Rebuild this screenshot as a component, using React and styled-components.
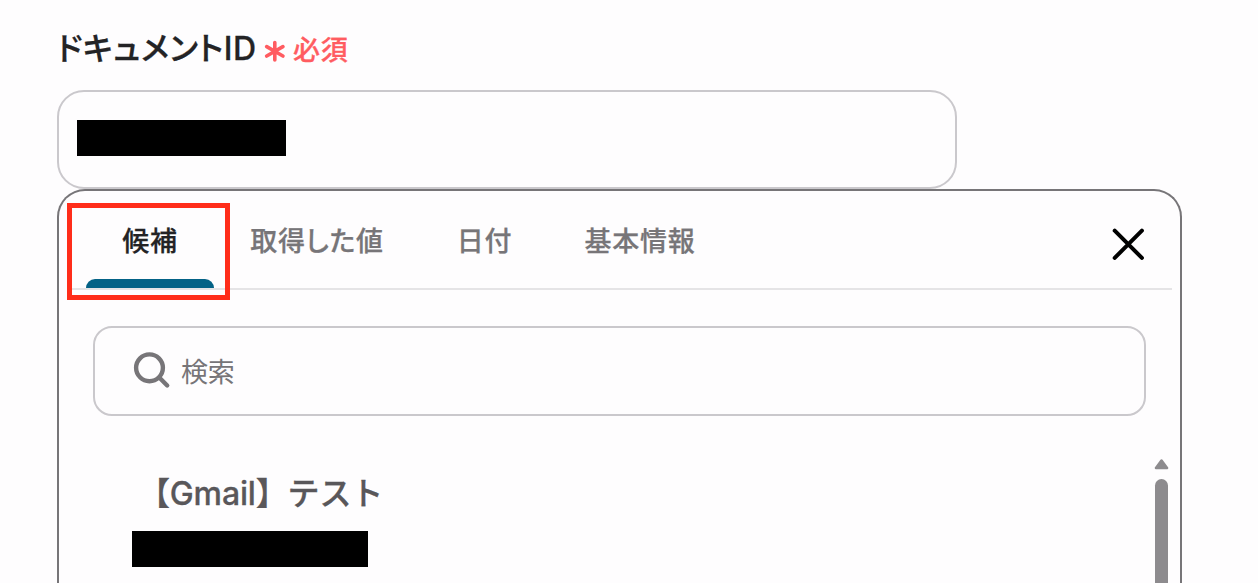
import React from 'react';
import styled, { createGlobalStyle } from 'styled-components';

const GlobalStyle = createGlobalStyle`
  * {
    box-sizing: border-box;
  }
  body {
    margin: 0;
    background: #fefdfe;
    font-family: Inter, 'Noto Sans CJK JP', sans-serif;
    overflow: hidden;
  }
`;

const PageBlock = styled.div`
  height: 583px;
  padding: 30px 76px 0 57px;
  display: flex;
  flex-direction: column;
  overflow: hidden;
`;

const FieldLabel = styled.div`
  display: flex;
  align-items: center;
  height: 40px;
  margin-bottom: 20px;
  white-space: nowrap;
`;

const LabelText = styled.span`
  width: 207px;
  padding-bottom: 3px;
  font-size: 32px;
  line-height: 38px;
  font-weight: 500;
  font-feature-settings: 'palt';
  letter-spacing: 0.55px;
  -webkit-text-stroke: 0.3px currentColor;
  color: #232325;
`;

const RequiredText = styled.span`
  margin-left: 8px;
  padding-top: 2px;
  font-size: 27px;
  line-height: 38px;
  font-weight: 500;
  letter-spacing: 0.8px;
  -webkit-text-stroke: 0.3px currentColor;
  color: #ff5c61;
`;

const FieldBox = styled.div`
  display: flex;
  align-items: center;
  flex-shrink: 0;
  width: 900px;
  height: 99px;
  padding: 0 18px 4px;
  border: 2px solid #cac8cc;
  border-radius: 27px;
`;

const MaskedValue = styled.div`
  width: ${({ $width }) => $width}px;
  height: 36px;
  background: #000;
`;

const Panel = styled.div`
  flex: 1;
  display: flex;
  flex-direction: column;
  border: 2px solid #777578;
  border-bottom: none;
  border-radius: 28px 28px 0 0;
`;

const TabBar = styled.div`
  display: flex;
  flex-shrink: 0;
  height: 99px;
  margin: 0 8px;
  border-bottom: 2px solid #e5e4e6;
`;

const Tab = styled.button`
  position: relative;
  width: ${({ $width }) => $width}px;
  height: 97px;
  padding: 0 1px 1px 0;
  border: none;
  background: none;
  font-family: inherit;
  font-size: 27px;
  font-weight: 500;
  font-feature-settings: 'palt';
  letter-spacing: 0.8px;
  -webkit-text-stroke: 0.25px currentColor;
  white-space: nowrap;
  color: ${({ $active }) => ($active ? '#232325' : '#777578')};
`;

const TabIndicator = styled.span`
  position: absolute;
  left: 19px;
  bottom: 0;
  width: 128px;
  height: 9px;
  border-radius: 9px 9px 0 0;
  background: #046286;
`;

const Highlight = styled.span`
  position: absolute;
  left: 0;
  top: 12px;
  width: 163px;
  height: 97px;
  border: 5px solid #ff2d1a;
`;

const CloseButton = styled.button`
  width: 32px;
  height: 32px;
  margin: 37px 28px 0 auto;
  padding: 0;
  border: none;
  background: none;

  svg {
    display: block;
  }
`;

const SearchBox = styled.div`
  display: flex;
  align-items: center;
  flex-shrink: 0;
  height: 90px;
  margin: 36px 34px 0;
  padding: 0 38px;
  border: 2px solid #cac8cc;
  border-radius: 19px;
`;

const SearchText = styled.span`
  margin-left: 10px;
  padding-top: 3px;
  font-size: 27px;
  line-height: 40px;
  letter-spacing: -0.3px;
  color: #777578;
`;

const ResultArea = styled.div`
  flex: 1;
  display: flex;
  justify-content: space-between;
  margin: 43px 11px 0 73px;
`;

const ResultItem = styled.div`
  padding-top: 15px;
`;

const ResultTitle = styled.div`
  height: 40px;
  margin: 0 0 17px 6px;
  font-size: 32px;
  line-height: 40px;
  font-weight: 500;
  letter-spacing: -0.15px;
  -webkit-text-stroke: 0.3px currentColor;
  white-space: nowrap;
  color: #59575a;
`;

const ScrollBar = styled.div`
  display: flex;
  flex-direction: column;
  align-items: center;
  width: 15px;
`;

const ScrollThumb = styled.div`
  flex: 1;
  width: 13px;
  margin-top: 9px;
  border-radius: 7px 7px 0 0;
  background: #8d8b8e;
`;

const tabs = [
  { label: '候補', width: 167 },
  { label: '取得した値', width: 167 },
  { label: '日付', width: 168 },
  { label: '基本情報', width: 143 },
];

const CloseIcon = () => (
  <svg width="32" height="32" viewBox="0 0 32 32">
    <path
      d="M2.7 2.7L29.9 29.9M29.9 2.7L2.7 29.9"
      stroke="#000"
      strokeWidth="4"
      strokeLinecap="round"
    />
  </svg>
);

const SearchIcon = () => (
  <svg width="38" height="38" viewBox="0 0 38 38" fill="none">
    <circle cx="16.5" cy="15.8" r="13.4" stroke="#777578" strokeWidth="4.4" />
    <path
      d="M26.5 25.8L34.2 33.5"
      stroke="#777578"
      strokeWidth="4.4"
      strokeLinecap="round"
    />
  </svg>
);

const RequiredIcon = () => (
  <svg width="21" height="24" viewBox="0 0 21 24">
    <path
      d="M10.8 4.5V22M2.7 8.6L18.9 18M18.9 8.6L2.7 18"
      stroke="#ff5c61"
      strokeWidth="3.6"
      strokeLinecap="round"
    />
  </svg>
);

const ScrollArrow = () => (
  <svg width="15" height="11" viewBox="0 0 15 11">
    <path
      d="M7.5 1.5L13 9H2Z"
      fill="#8d8b8e"
      stroke="#8d8b8e"
      strokeWidth="2.6"
      strokeLinejoin="round"
    />
  </svg>
);

const App = () => {
  return (
    <>
      <GlobalStyle />
      <PageBlock>
        <FieldLabel>
          <LabelText>ドキュメントID</LabelText>
          <RequiredIcon />
          <RequiredText>必須</RequiredText>
        </FieldLabel>
        <FieldBox>
          <MaskedValue $width={209} />
        </FieldBox>
        <Panel>
          <TabBar>
            {tabs.map(({ label, width }, index) => (
              <Tab key={label} $width={width} $active={index === 0}>
                {label}
                {index === 0 && (
                  <>
                    <TabIndicator />
                    <Highlight />
                  </>
                )}
              </Tab>
            ))}
            <CloseButton aria-label="閉じる">
              <CloseIcon />
            </CloseButton>
          </TabBar>
          <SearchBox>
            <SearchIcon />
            <SearchText>検索</SearchText>
          </SearchBox>
          <ResultArea>
            <ResultItem>
              <ResultTitle>【Gmail】テスト</ResultTitle>
              <MaskedValue $width={236} />
            </ResultItem>
            <ScrollBar>
              <ScrollArrow />
              <ScrollThumb />
            </ScrollBar>
          </ResultArea>
        </Panel>
      </PageBlock>
    </>
  );
};

export default App;
